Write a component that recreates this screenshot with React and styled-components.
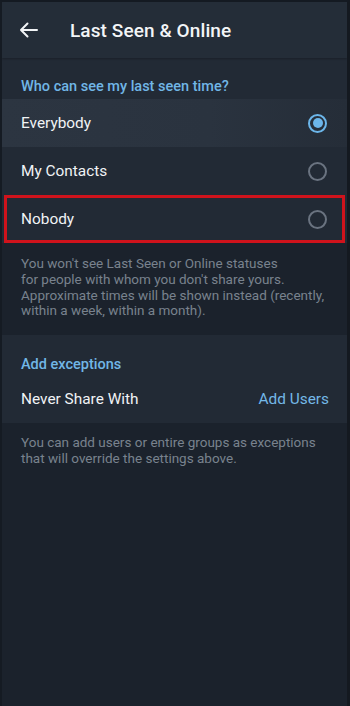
import React from "react";
import styled, { createGlobalStyle } from "styled-components";

const Global = createGlobalStyle`
  html, body { margin: 0; padding: 0; background: #1b222c; }
  body { font-family: Roboto, "Noto Sans", Arial, sans-serif; -webkit-font-smoothing: antialiased; }
  #root { height: 706px; }
`;

const Screen = styled.div`
  box-sizing: border-box;
  width: 350px;
  height: 706px;
  background: #1b222c;
  border-top: 2px solid #141a22;
  border-left: 2px solid #151b23;
  border-right: 3px solid #141920;
  display: flex;
  flex-direction: column;
  overflow: hidden;
`;

const Header = styled.header`
  height: 56px;
  flex: none;
  background: #242d38;
  display: flex;
  align-items: center;
  padding-left: 16px;
  box-shadow: 0 1px 2px rgba(0, 0, 0, 0.25);
  position: relative;
  z-index: 1;
`;

const BackButton = styled.button`
  background: none;
  border: 0;
  padding: 0;
  width: 20px;
  height: 20px;
  display: flex;
  align-items: center;
  justify-content: center;
  color: #f2f4f6;
`;

const Title = styled.h1`
  margin: 0 0 0 32px;
  font-size: 19px;
  font-weight: 500;
  color: #f3f5f7;
  letter-spacing: 0.1px;
`;

const Section = styled.section`
  background: #222a35;
  display: flex;
  flex-direction: column;
`;

const SectionLabel = styled.div`
  color: #71b6e6;
  font-size: 14.5px;
  font-weight: 500;
  padding: ${(p) => p.$top}px 19px 0;
  height: ${(p) => p.$height}px;
  line-height: 20px;
`;

const Row = styled.div`
  height: 48px;
  display: flex;
  align-items: center;
  justify-content: space-between;
  padding: 0 18px 0 19px;
  color: #f1f3f5;
  font-size: 15.4px;
  position: relative;
  background: ${(p) =>
    p.$pressed
      ? "linear-gradient(90deg, #2c3541 0%, #2a333f 60%, #252d38 100%)"
      : "transparent"};
`;

const Highlight = styled.div`
  position: absolute;
  left: 2px;
  right: 2px;
  top: 0;
  bottom: 0;
  border: 3px solid #d0131c;
  pointer-events: none;
`;

const RadioOuter = styled.span`
  box-sizing: border-box;
  width: 19px;
  height: 19px;
  margin-right: 2px;
  border-radius: 50%;
  border: 2px solid ${(p) => (p.$checked ? "#6cb6ea" : "#6a7380")};
  display: flex;
  align-items: center;
  justify-content: center;
`;

const RadioDot = styled.span`
  width: 10px;
  height: 10px;
  border-radius: 50%;
  background: #6cb6ea;
`;

const LinkText = styled.span`
  color: #74b8e7;
  font-size: 15.4px;
`;

const Footer = styled.div`
  color: #79828e;
  font-size: 13.5px;
  line-height: 15.8px;
  padding: ${(p) => p.$pad};
`;

const Radio = ({ checked }) => (
  <RadioOuter $checked={checked}>{checked && <RadioDot />}</RadioOuter>
);

export default function App() {
  return (
    <>
      <Global />
      <Screen>
        <Header>
          <BackButton aria-label="Back">
            <svg width="19" height="16" viewBox="0 0 19 16" fill="none">
              <path
                d="M18 8H2M8.5 1.5L2 8l6.5 6.5"
                stroke="#f2f4f6"
                strokeWidth="2"
                strokeLinecap="round"
                strokeLinejoin="round"
              />
            </svg>
          </BackButton>
          <Title>Last Seen &amp; Online</Title>
        </Header>
        <Section>
          <SectionLabel $top={19} $height={22}>Who can see my last seen time?</SectionLabel>
          <Row $pressed>
            Everybody
            <Radio checked />
          </Row>
          <Row>
            My Contacts
            <Radio />
          </Row>
          <Row>
            Nobody
            <Radio />
            <Highlight />
          </Row>
        </Section>
        <Footer $pad="13px 19px 16px">
          You won't see Last Seen or Online statuses
          <br />
          for people with whom you don't share yours.
          <br />
          Approximate times will be shown instead (recently,
          <br />
          within a week, within a month).
        </Footer>
        <Section>
          <SectionLabel $top={20} $height={20}>Add exceptions</SectionLabel>
          <Row>
            Never Share With
            <LinkText>Add Users</LinkText>
          </Row>
        </Section>
        <Footer $pad="12px 19px">
          You can add users or entire groups as exceptions
          <br />
          that will override the settings above.
        </Footer>
      </Screen>
    </>
  );
}
